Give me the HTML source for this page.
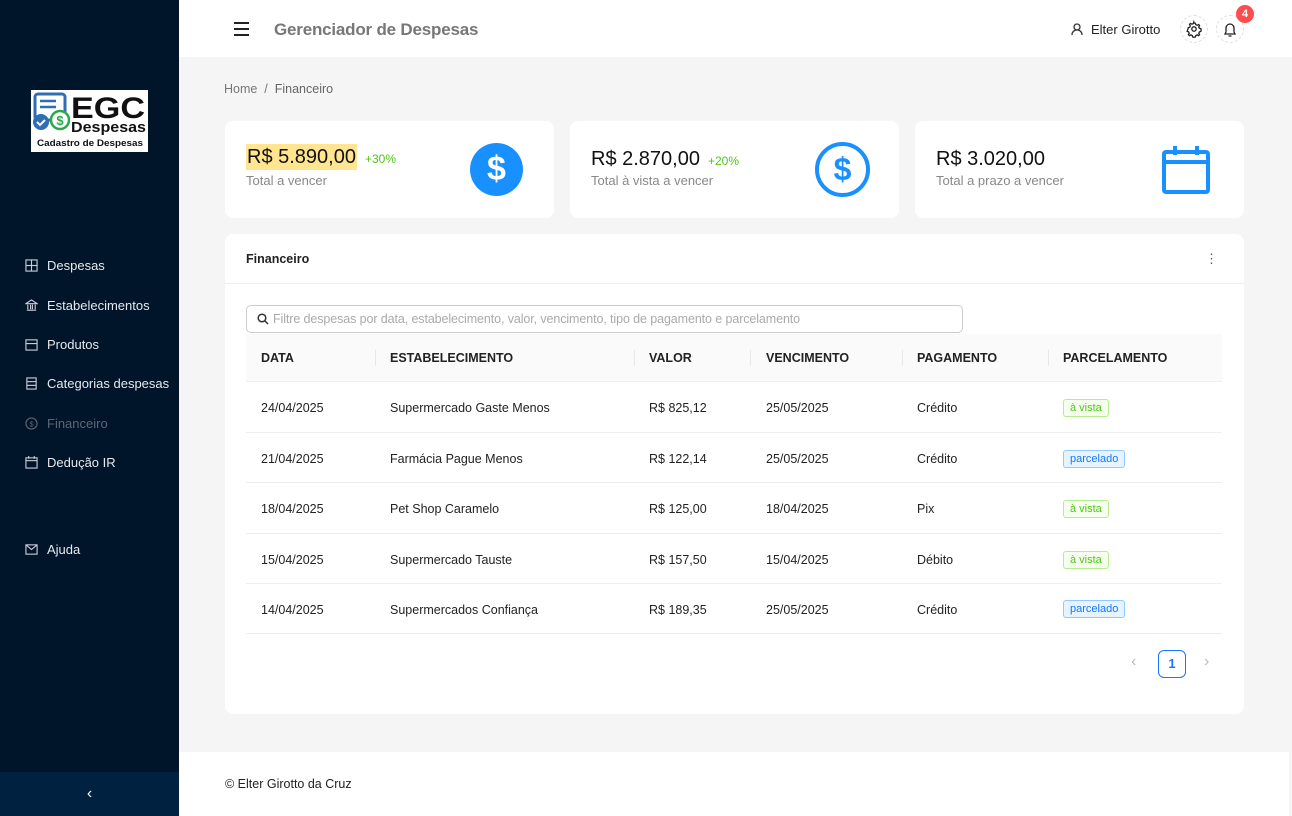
<!DOCTYPE html>
<html><head><meta charset="utf-8"><style>
*{box-sizing:border-box;margin:0;padding:0}
body{width:1292px;height:816px;overflow:hidden;font-family:"Liberation Sans",sans-serif;background:#f5f5f5;position:relative;font-size:12.5px;color:#222}
.sb{position:absolute;left:0;top:0;width:179px;height:816px;background:#001529}
.sbb{position:absolute;left:0;bottom:0;width:179px;height:44px;background:#002140;color:#fff;text-align:center;line-height:44px;font-size:16px}
.logo{position:absolute;left:31px;top:90px;width:117px;height:62px;background:#fff}
.mi{position:absolute;left:25px;color:#e6e9ee;font-size:13px;display:flex;align-items:center;gap:9px}
.mi svg{width:13px;height:13px}
.hd{position:absolute;left:179px;top:0;right:0;height:57px;background:#fff}
.card{position:absolute;background:#fff;border-radius:8px}
.big{font-size:20px;color:#111}
.sub{font-size:13px;color:#888;margin-top:2px}
.pct{font-size:12px;color:#52c41a;margin-left:8px}
.th{position:absolute;top:334px;height:48px;left:246px;width:976px;background:#fafafa;border-bottom:1px solid #eee;font-weight:bold}
.c{position:absolute;font-size:12.5px}
.th .c{font-size:12.5px}
.row{position:absolute;left:246px;width:976px;height:50px;border-bottom:1px solid #eee}
.tag{position:absolute;font-size:11px;padding:2px 6px;border-radius:3px;top:16px}
.g{color:#52c41a;background:#f6ffed;border:1px solid #b7eb8f}
.b{color:#1677ff;background:#e6f4ff;border:1px solid #91caff}
.sep{position:absolute;top:16px;width:1px;height:16px;background:#e8e8e8}
</style></head><body>
<div class="sb">
<div class="logo">
<svg width="117" height="62" viewBox="0 0 117 62"><rect x="4" y="4" width="30" height="26" rx="3" fill="none" stroke="#2f6db5" stroke-width="3"/><line x1="9" y1="11" x2="25" y2="11" stroke="#2f6db5" stroke-width="2.5"/><line x1="9" y1="17" x2="25" y2="17" stroke="#2f6db5" stroke-width="2.5"/><circle cx="10" cy="32" r="8" fill="#2f6db5"/><path d="M6 32l3 3 5-5" stroke="#fff" stroke-width="2" fill="none"/><circle cx="29" cy="30" r="9" fill="#fff" stroke="#2aa84a" stroke-width="2.5"/><text x="29" y="35" font-size="13" text-anchor="middle" fill="#2aa84a" font-family="Liberation Sans" font-weight="bold">$</text>
<text x="40" y="28" font-size="30" font-weight="bold" fill="#111" font-family="Liberation Sans" textLength="74" lengthAdjust="spacingAndGlyphs">EGC</text>
<text x="40" y="42" font-size="15" font-weight="bold" fill="#111" font-family="Liberation Sans" textLength="75" lengthAdjust="spacingAndGlyphs">Despesas</text>
<text x="6" y="56" font-size="9.5" font-weight="bold" fill="#111" font-family="Liberation Sans" textLength="106" lengthAdjust="spacingAndGlyphs">Cadastro de Despesas</text></svg>
</div>
<div class="mi" style="top:258px"><svg viewBox="0 0 14 14" fill="none" stroke="#ccd" stroke-width="1.2"><rect x="1" y="1" width="12" height="12"/><line x1="7" y1="1" x2="7" y2="13"/><line x1="1" y1="7" x2="13" y2="7"/></svg>Despesas</div>
<div class="mi" style="top:298px"><svg viewBox="0 0 14 14" fill="none" stroke="#ccd" stroke-width="1.2"><path d="M1 5L7 1l6 4zM2 12h10M3 6v5M6 6v5M8 6v5M11 6v5"/></svg>Estabelecimentos</div>
<div class="mi" style="top:337px"><svg viewBox="0 0 14 14" fill="none" stroke="#ccd" stroke-width="1.2"><rect x="1" y="2" width="12" height="11"/><line x1="1" y1="6" x2="13" y2="6"/></svg>Produtos</div>
<div class="mi" style="top:376px"><svg viewBox="0 0 14 14" fill="none" stroke="#ccd" stroke-width="1.2"><rect x="2" y="1" width="10" height="12"/><line x1="2" y1="5" x2="12" y2="5"/><line x1="2" y1="9" x2="12" y2="9"/></svg>Categorias despesas</div>
<div class="mi" style="top:416px;color:#5c6776"><svg viewBox="0 0 14 14" fill="none" stroke="#5c6776" stroke-width="1.2"><circle cx="7" cy="7" r="6"/><text x="7" y="10" font-size="8" text-anchor="middle" fill="#5c6776" stroke="none">$</text></svg>Financeiro</div>
<div class="mi" style="top:455px"><svg viewBox="0 0 14 14" fill="none" stroke="#ccd" stroke-width="1.2"><rect x="1" y="2" width="12" height="11"/><line x1="1" y1="5" x2="13" y2="5"/><line x1="4" y1="0" x2="4" y2="3"/><line x1="10" y1="0" x2="10" y2="3"/></svg>Dedução IR</div>
<div class="mi" style="top:542px"><svg viewBox="0 0 14 14" fill="none" stroke="#ccd" stroke-width="1.2"><rect x="1" y="2" width="12" height="10"/><path d="M1 2l6 5 6-5"/></svg>Ajuda</div>
<div class="sbb">‹</div>
</div>
<div class="hd">
<div style="position:absolute;left:55px;top:22px;width:15px"><div style="height:2px;background:#222;margin-bottom:4px"></div><div style="height:2px;background:#222;margin-bottom:4px"></div><div style="height:2px;background:#222"></div></div>
<div style="position:absolute;left:95px;top:20px;font-size:17px;color:#777;font-weight:bold;letter-spacing:-0.2px">Gerenciador de Despesas</div>
<div style="position:absolute;left:892px;top:22px;font-size:13px;display:flex;gap:8px;align-items:center"><svg width="12" height="13" viewBox="0 0 12 13" fill="none" stroke="#333" stroke-width="1.3"><circle cx="6" cy="4" r="3"/><path d="M1 12c0-3 2-5 5-5s5 2 5 5"/></svg>Elter Girotto</div>
<div style="position:absolute;left:1001px;top:15px;width:28px;height:28px;border:1px dashed #ddd;border-radius:50%"><svg width="26" height="26" viewBox="0 0 26 26" fill="none" stroke="#222" stroke-width="1.3"><circle cx="13" cy="13" r="2.2"/><path d="M13 7l1.3.2.5 1.5 1.4.6 1.4-.8 1 1-.8 1.4.6 1.4 1.5.5.2 1.3-.2 1.3-1.5.5-.6 1.4.8 1.4-1 1-1.4-.8-1.4.6-.5 1.5-1.3.2-1.3-.2-.5-1.5-1.4-.6-1.4.8-1-1 .8-1.4-.6-1.4-1.5-.5L7 13l.2-1.3 1.5-.5.6-1.4-.8-1.4 1-1 1.4.8 1.4-.6.5-1.5z"/></svg></div>
<div style="position:absolute;left:1037px;top:15px;width:28px;height:28px;border:1px dashed #ddd;border-radius:50%"><svg width="26" height="26" viewBox="0 0 26 26" fill="none" stroke="#222" stroke-width="1.3"><path d="M8 18h10l-1-2v-4a4 4 0 0 0-8 0v4zM11.5 20h3"/></svg></div>
<div style="position:absolute;left:1057px;top:5px;width:18px;height:18px;border-radius:50%;background:#ff4d4f;color:#fff;font-size:11px;text-align:center;line-height:18px;font-weight:bold">4</div>
</div>
<div style="position:absolute;left:224px;top:82px;color:#777;font-size:12.5px">Home &nbsp;/&nbsp; <span style="color:#666">Financeiro</span></div>

<div class="card" style="left:225px;top:121px;width:329px;height:97px">
<div style="position:absolute;left:21px;top:25px"><span class="big" style="background:#ffe58f;padding:2px 1px">R$ 5.890,00</span><span class="pct">+30%</span><div class="sub" style="margin-top:4px">Total a vencer</div></div>
<div style="position:absolute;left:245px;top:22px;width:53px;height:53px;border-radius:50%;background:#1890ff;color:#fff;font-size:34px;text-align:center;line-height:53px;font-weight:bold">$</div></div>
<div class="card" style="left:570px;top:121px;width:329px;height:97px">
<div style="position:absolute;left:21px;top:27px"><span class="big">R$ 2.870,00</span><span class="pct">+20%</span><div class="sub">Total à vista a vencer</div></div>
<div style="position:absolute;left:245px;top:21px;width:55px;height:55px;border-radius:50%;border:4px solid #1890ff;color:#1890ff;font-size:32px;text-align:center;line-height:47px;font-weight:bold">$</div></div>
<div class="card" style="left:915px;top:121px;width:329px;height:97px">
<div style="position:absolute;left:21px;top:27px"><span class="big">R$ 3.020,00</span><div class="sub">Total a prazo a vencer</div></div>
<svg style="position:absolute;left:246px;top:24px" width="50" height="50" viewBox="0 0 50 50" fill="none" stroke="#1890ff" stroke-width="4"><rect x="3" y="7" width="44" height="40" rx="2"/><line x1="3" y1="17" x2="47" y2="17"/><line x1="14" y1="1" x2="14" y2="10"/><line x1="36" y1="1" x2="36" y2="10"/></svg></div>

<div class="card" style="left:225px;top:234px;width:1019px;height:480px">
<div style="position:absolute;left:21px;top:18px;font-weight:bold;font-size:12.5px">Financeiro</div>
<div style="position:absolute;right:26px;top:17px;color:#555;font-size:13px">⋮</div>
<div style="position:absolute;left:0;right:0;top:49px;border-top:1px solid #eee"></div>
</div>
<div style="position:absolute;left:246px;top:305px;width:717px;height:28px;border:1px solid #ccc;border-radius:5px;background:#fff;color:#aaa;font-size:12.5px;line-height:27px;padding-left:26px;letter-spacing:-0.1px">Filtre despesas por data, estabelecimento, valor, vencimento, tipo de pagamento e parcelamento
<svg style="position:absolute;left:10px;top:7px" width="12" height="12" viewBox="0 0 12 12" fill="none" stroke="#333" stroke-width="1.5"><circle cx="5" cy="5" r="3.8"/><line x1="8" y1="8" x2="11" y2="11"/></svg></div>
<div class="th">
<div class="c" style="left:15px;top:17px">DATA</div><div class="sep" style="left:129px"></div>
<div class="c" style="left:144px;top:17px">ESTABELECIMENTO</div><div class="sep" style="left:388px"></div>
<div class="c" style="left:403px;top:17px">VALOR</div><div class="sep" style="left:504px"></div>
<div class="c" style="left:520px;top:17px">VENCIMENTO</div><div class="sep" style="left:656px"></div>
<div class="c" style="left:671px;top:17px">PAGAMENTO</div><div class="sep" style="left:802px"></div>
<div class="c" style="left:817px;top:17px">PARCELAMENTO</div>
</div>
<div class="row" style="top:383px"><div class="c" style="left:15px;top:18px">24/04/2025</div><div class="c" style="left:144px;top:18px">Supermercado Gaste Menos</div><div class="c" style="left:403px;top:18px">R$ 825,12</div><div class="c" style="left:520px;top:18px">25/05/2025</div><div class="c" style="left:671px;top:18px">Crédito</div><span class="tag g" style="left:817px">à vista</span></div>
<div class="row" style="top:433px"><div class="c" style="left:15px;top:19px">21/04/2025</div><div class="c" style="left:144px;top:19px">Farmácia Pague Menos</div><div class="c" style="left:403px;top:19px">R$ 122,14</div><div class="c" style="left:520px;top:19px">25/05/2025</div><div class="c" style="left:671px;top:19px">Crédito</div><span class="tag b" style="left:817px;top:17px">parcelado</span></div>
<div class="row" style="top:484px"><div class="c" style="left:15px;top:18px">18/04/2025</div><div class="c" style="left:144px;top:18px">Pet Shop Caramelo</div><div class="c" style="left:403px;top:18px">R$ 125,00</div><div class="c" style="left:520px;top:18px">18/04/2025</div><div class="c" style="left:671px;top:18px">Pix</div><span class="tag g" style="left:817px">à vista</span></div>
<div class="row" style="top:534px"><div class="c" style="left:15px;top:19px">15/04/2025</div><div class="c" style="left:144px;top:19px">Supermercado Tauste</div><div class="c" style="left:403px;top:19px">R$ 157,50</div><div class="c" style="left:520px;top:19px">15/04/2025</div><div class="c" style="left:671px;top:19px">Débito</div><span class="tag g" style="left:817px;top:17px">à vista</span></div>
<div class="row" style="top:584px"><div class="c" style="left:15px;top:19px">14/04/2025</div><div class="c" style="left:144px;top:19px">Supermercados Confiança</div><div class="c" style="left:403px;top:19px">R$ 189,35</div><div class="c" style="left:520px;top:19px">25/05/2025</div><div class="c" style="left:671px;top:19px">Crédito</div><span class="tag b" style="left:817px;top:16px">parcelado</span></div>
<div style="position:absolute;left:1131px;top:653px;color:#bbb;font-size:16px">‹</div>
<div style="position:absolute;left:1158px;top:650px;width:28px;height:28px;border:1px solid #1677ff;border-radius:6px;color:#1677ff;text-align:center;line-height:26px;font-weight:bold;font-size:13px">1</div>
<div style="position:absolute;left:1204px;top:653px;color:#bbb;font-size:16px">›</div>
<div style="position:absolute;left:179px;top:752px;width:1110px;height:64px;background:#fff"><div style="position:absolute;left:46px;top:25px;font-size:12.5px">© Elter Girotto da Cruz</div></div>
</body></html>
